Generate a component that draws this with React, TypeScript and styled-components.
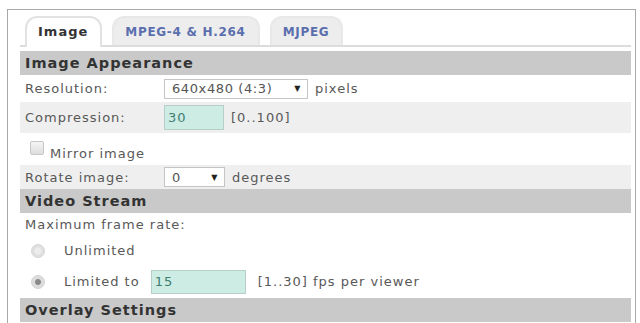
import styled, { createGlobalStyle } from 'styled-components';

const GlobalStyle = createGlobalStyle`
  html, body {
    margin: 0;
    padding: 0;
    background: #ffffff;
    font-family: "DejaVu Sans", Verdana, sans-serif;
    overflow: hidden;
  }
`;

export default function App() {
  return (
    <>
      <GlobalStyle />
      <Page>
        <Frame>
          <TabBar>
            <Tab $active>Image</Tab>
            <Tab>MPEG-4 &amp; H.264</Tab>
            <Tab>MJPEG</Tab>
          </TabBar>
          <Content>
            <SectionHeader>Image Appearance</SectionHeader>
            <Row $height={27}>
              <Label>Resolution:</Label>
              <Select $width={144}>
                <span>640x480 (4:3)</span>
                <Arrow>▼</Arrow>
              </Select>
              <Unit>pixels</Unit>
            </Row>
            <Row $height={31} $shaded>
              <Label>Compression:</Label>
              <TextInput $width={60} $height={25}>30</TextInput>
              <Unit>[0..100]</Unit>
            </Row>
            <Row $height={32}>
              <CheckBox />
              <CheckLabel>Mirror image</CheckLabel>
            </Row>
            <Row $height={24} $shaded>
              <Label>Rotate image:</Label>
              <Select $width={61}>
                <span>0</span>
                <Arrow>▼</Arrow>
              </Select>
              <Unit>degrees</Unit>
            </Row>
            <SectionHeader>Video Stream</SectionHeader>
            <Row $height={23}>
              <Label>Maximum frame rate:</Label>
            </Row>
            <Row $height={29}>
              <Radio />
              <RadioLabel>Unlimited</RadioLabel>
            </Row>
            <Row $height={33}>
              <Radio $checked />
              <RadioLabel>Limited to</RadioLabel>
              <TextInput $width={95} $height={24}>15</TextInput>
              <Unit $gap={12}>[1..30] fps per viewer</Unit>
            </Row>
            <SectionHeader>Overlay Settings</SectionHeader>
          </Content>
        </Frame>
      </Page>
    </>
  );
}

const Page = styled.div`
  width: 640px;
  height: 323px;
  padding: 9px 4px 0 7px;
  box-sizing: border-box;
  overflow: hidden;
`;

const Frame = styled.div`
  border: 1px solid #a8a8a8;
  border-bottom: none;
  height: 330px;
  padding: 0 4px 0 12px;
  box-sizing: border-box;
`;

const TabBar = styled.div`
  display: flex;
  align-items: flex-end;
  gap: 10px;
  height: 35px;
  padding-left: 5px;
  border-bottom: 2px solid #dcdcdc;
`;

const Tab = styled.div<{ $active?: boolean }>`
  height: 27px;
  padding: 0 12px 0 11px;
  display: flex;
  align-items: center;
  font-size: ${({ $active }) => ($active ? '13px' : '12px')};
  letter-spacing: ${({ $active }) => ($active ? '1px' : '0.7px')};
  font-weight: bold;
  color: ${({ $active }) => ($active ? '#333333' : '#5b6fae')};
  background: ${({ $active }) => ($active ? '#ffffff' : '#ededed')};
  border: 2px solid ${({ $active }) => ($active ? '#e2e2e2' : '#e8e8e8')};
  border-bottom: none;
  border-radius: 12px 12px 0 0;
  margin-bottom: ${({ $active }) => ($active ? '-2px' : '0')};
  padding-bottom: ${({ $active }) => ($active ? '2px' : '0')};
`;

const Content = styled.div`
  margin-top: 4px;
  display: flex;
  flex-direction: column;
`;

const SectionHeader = styled.div`
  height: 24px;
  background: #c9c9c9;
  display: flex;
  align-items: center;
  padding-left: 5px;
  font-size: 14.5px;
  letter-spacing: 1px;
  font-weight: bold;
  color: #333333;
`;

const Row = styled.div<{ $height: number; $shaded?: boolean }>`
  height: ${({ $height }) => $height}px;
  background: ${({ $shaded }) => ($shaded ? '#efefef' : '#ffffff')};
  display: flex;
  align-items: center;
  padding-left: 5px;
  font-size: 13px;
  letter-spacing: 1px;
  color: #585858;
  white-space: nowrap;
`;

const Label = styled.span`
  min-width: 139px;
  flex-shrink: 0;
`;

const Select = styled.div<{ $width: number }>`
  width: ${({ $width }) => $width}px;
  height: 20px;
  box-sizing: border-box;
  border: 1px solid #c4c4c4;
  background: #ffffff;
  display: flex;
  align-items: center;
  justify-content: space-between;
  padding: 0 6px 0 7px;
  color: #555555;
  letter-spacing: 0.6px;
`;

const Arrow = styled.span`
  font-size: 8px;
  color: #222222;
`;

const TextInput = styled.div<{ $width: number; $height: number }>`
  width: ${({ $width }) => $width}px;
  height: ${({ $height }) => $height}px;
  box-sizing: border-box;
  background: #cdece4;
  border: 1px solid #b8cfc9;
  display: flex;
  align-items: center;
  padding-left: 3px;
  color: #3f7f70;
`;

const Unit = styled.span<{ $gap?: number }>`
  margin-left: ${({ $gap }) => $gap ?? 7}px;
`;

const CheckBox = styled.span`
  width: 14px;
  height: 14px;
  box-sizing: border-box;
  margin: 0 6px 0 5px;
  border: 1px solid #c8c8c8;
  border-radius: 2px;
  background: linear-gradient(#f4f4f4, #dedede);
  align-self: flex-start;
  margin-top: 8px;
`;

const CheckLabel = styled.span`
  margin-top: 8px;
`;

const Radio = styled.span<{ $checked?: boolean }>`
  width: 12px;
  height: 12px;
  margin: 0 19px 0 6px;
  border-radius: 50%;
  border: 1px solid #d4d4d4;
  background: radial-gradient(
    circle,
    ${({ $checked }) => ($checked ? '#8a8a8a 0 2.5px, #dcdcdc 3.5px' : '#ececec 0 3px, #e0e0e0 4px')}
  );
`;

const RadioLabel = styled.span`
  margin-right: 11px;
`;
